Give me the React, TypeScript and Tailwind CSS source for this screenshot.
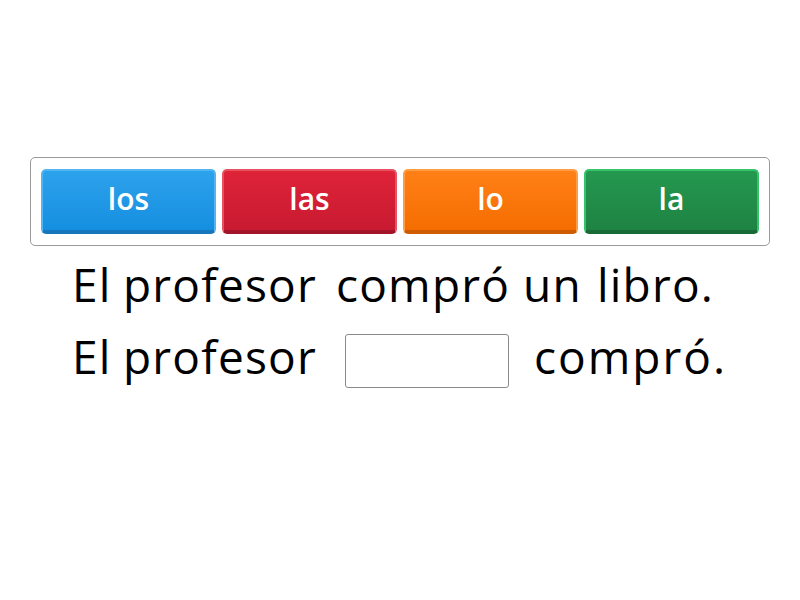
import React from "react";

const buttons = [
  { t: "los", cls: "border-[#52b4f2] border-b-[#1677bd] from-[#2da2ec] to-[#148fe0]" },
  { t: "las", cls: "border-[#e6525f] border-b-[#a3142a] from-[#df2339] to-[#c81a31]" },
  { t: "lo", cls: "border-[#ff9d45] border-b-[#cf5c00] from-[#ff8016] to-[#f56d00]" },
  { t: "la", cls: "border-[#35c46b] border-b-[#186b37] from-[#25984f] to-[#1e8343]" },
];

export default function App() {
  return (
    <div className="w-[800px] h-[600px] bg-white" style={{ fontFamily: '"Open Sans", sans-serif' }}>
      <div className="pt-[157px] px-[30px]">
        <div className="border border-[#9a9a9a] rounded-[5px] pt-[11px] pb-[11px] px-[10px] flex gap-[6px]">
          {buttons.map((b) => (
            <div
              key={b.t}
              className={`flex-1 h-[65px] rounded-[5px] border-2 border-b-[4px] bg-gradient-to-b flex items-center justify-center text-white font-semibold text-[30px] pb-[5px] ${b.cls}`}
            >
              {b.t}
            </div>
          ))}
        </div>
      </div>
      <div className="mt-[2px] pl-[72px] text-black text-[46px] tracking-[1.2px] leading-[72px] whitespace-nowrap">
        <div className="flex items-center h-[72px]">
          <span className="w-[51px]">El</span>
          <span className="w-[213px]">profesor</span>
          <span className="w-[187px]">compró</span>
          <span className="w-[74px]">un</span>
          <span>libro.</span>
        </div>
        <div className="flex items-center h-[72px]">
          <span className="w-[51px]">El</span>
          <span className="w-[222px]">profesor</span>
          <span className="w-[164px] h-[54px] border border-[#8a8a8a] rounded-[3px] mr-[25px] mt-[10px]"></span>
          <span className="tracking-[2px]">compró.</span>
        </div>
      </div>
    </div>
  );
}
